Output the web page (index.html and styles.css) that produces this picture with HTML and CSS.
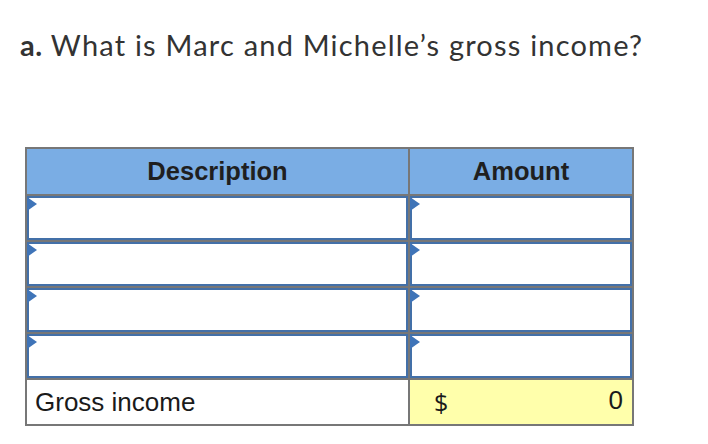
FILE: index.html
```html
<!DOCTYPE html>
<html>
<head>
<meta charset="utf-8">
<link rel="stylesheet" href="styles.css">
</head>
<body>
<h1 class="question"><span class="label">a.</span> What is Marc and Michelle’s gross income?</h1>
<table class="grid">
  <colgroup><col class="c-desc"><col class="c-amt"></colgroup>
  <thead>
    <tr><th>Description</th><th>Amount</th></tr>
  </thead>
  <tbody>
    <tr><td class="edit"><span class="flag"></span><div class="box"></div></td><td class="edit"><span class="flag"></span><div class="box"></div></td></tr>
    <tr><td class="edit"><span class="flag"></span><div class="box"></div></td><td class="edit"><span class="flag"></span><div class="box"></div></td></tr>
    <tr><td class="edit"><span class="flag"></span><div class="box"></div></td><td class="edit"><span class="flag"></span><div class="box"></div></td></tr>
    <tr><td class="edit"><span class="flag"></span><div class="box"></div></td><td class="edit"><span class="flag"></span><div class="box"></div></td></tr>
    <tr class="total"><td class="total-label">Gross income</td><td class="total-amt"><span class="cur">$</span><span class="val">0</span></td></tr>
  </tbody>
</table>
</body>
</html>
```
FILE: styles.css
```css
html, body { margin: 0; padding: 0; background: #fff; }
body { width: 708px; height: 444px; overflow: hidden; }
.question {
  margin: 0;
  padding: 27px 0 0 20px;
  font-family: Lato, "Open Sans", sans-serif;
  font-weight: 400;
  font-size: 29px;
  letter-spacing: 1.2px;
  line-height: 36px;
  color: #333;
}
.question .label { font-weight: 700; letter-spacing: 0.5px; }
.grid {
  margin: 84px 0 0 25px;
  border-collapse: collapse;
  table-layout: fixed;
  width: 607px;
  font-family: "Liberation Sans", Arial, sans-serif;
  border: 2px solid #777;
}
.c-desc { width: 383px; }
.c-amt { width: 224px; }
.grid th, .grid td { border: 2px solid #777; padding: 0; }
.grid th {
  background: #7aade4;
  height: 45px;
  font-size: 25.5px;
  font-weight: 700;
  color: #1f1f1f;
  text-align: center;
}
.grid td { height: 44px; }
.edit { position: relative; }
.box {
  box-sizing: border-box;
  height: 44px;
  width: 100%;
  border: 2px solid #4370a8;
  background: #fff;
}
.flag {
  position: absolute;
  left: 0;
  top: 1px;
  width: 0; height: 0;
  border-top: 7px solid transparent;
  border-bottom: 7px solid transparent;
  border-left: 10px solid #3f74b8;
}
.total-label {
  font-size: 26px;
  color: #1a1a1a;
  padding-left: 8px !important;
}
.total-amt {
  background: #ffffab;
  font-size: 26px;
  color: #1a1a1a;
}
.total-amt { padding: 0 9px 0 24px !important; }
.total-amt .cur { float: left; font-family: "Open Sans", "Liberation Sans", sans-serif; font-size: 25px; }
.total-amt .val { float: right; }
```
